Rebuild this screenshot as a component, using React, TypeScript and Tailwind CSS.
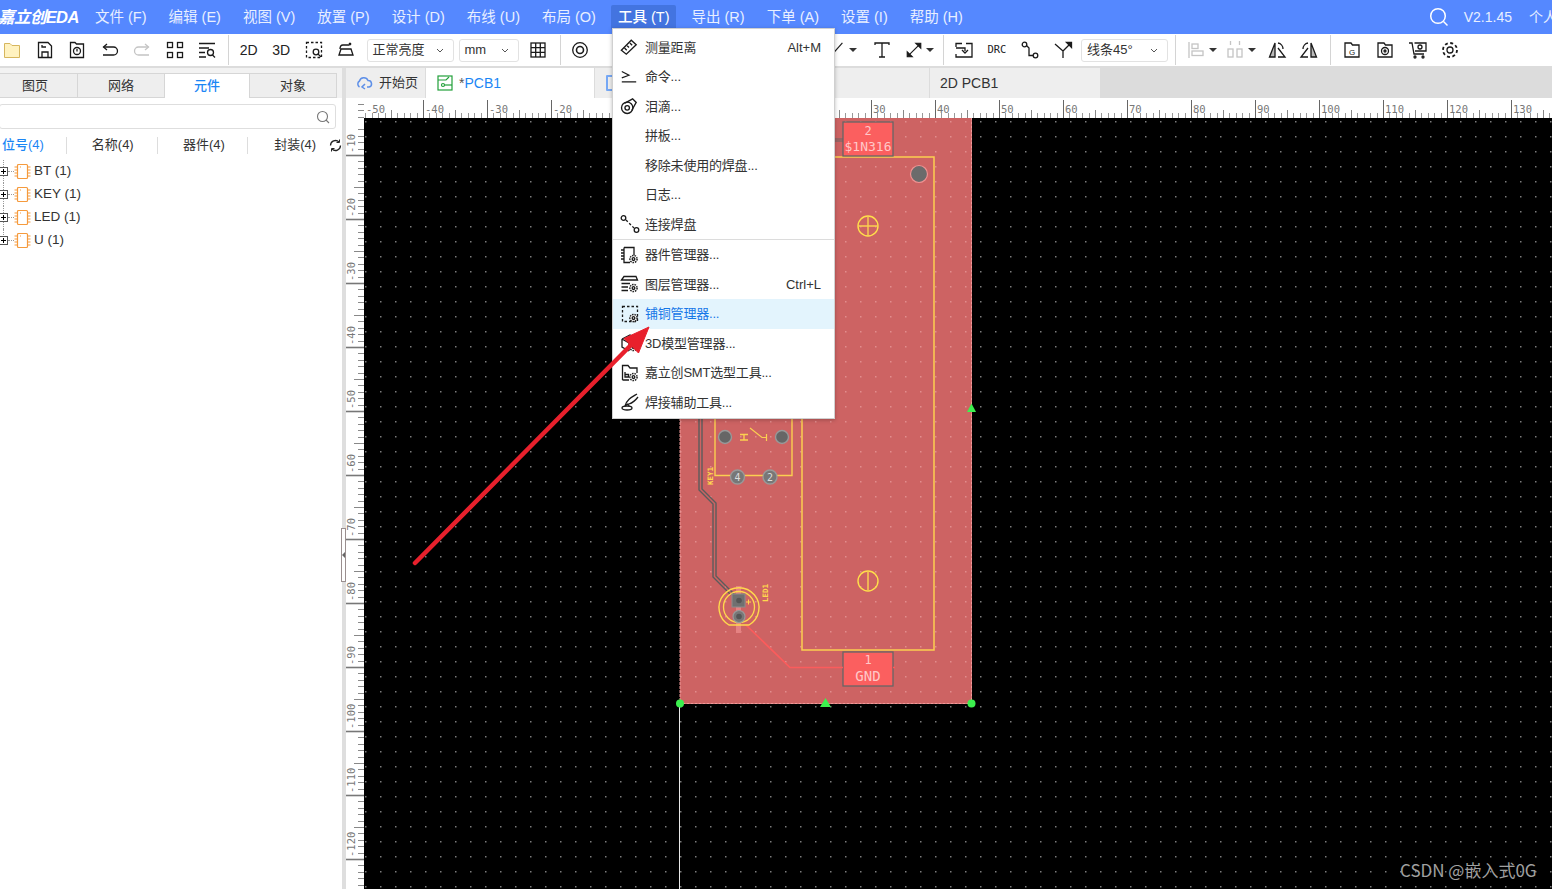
import type { ReactNode } from "react";

const menus = ["文件 (F)", "编辑 (E)", "视图 (V)", "放置 (P)", "设计 (D)", "布线 (U)", "布局 (O)"];
const menusAfter = ["导出 (R)", "下单 (A)", "设置 (I)", "帮助 (H)"];

function Ic({ children, size = 20, light = false }: { children: ReactNode; size?: number; light?: boolean }) {
  return (
    <svg width={size} height={size} viewBox="0 0 20 20" fill="none" stroke={light ? "#c4c4c4" : "#1a1a1a"} strokeWidth="1.3">
      {children}
    </svg>
  );
}

function Gear({ x, y }: { x: number; y: number }) {
  return (
    <g transform={`translate(${x} ${y})`}>
      <circle r="3.6" fill="#fff" stroke="#222" strokeWidth="1.5" strokeDasharray="1.6 0.9" />
      <circle r="1.3" />
    </g>
  );
}

function Tool({ children, w = "w-[32.5px]" }: { children: ReactNode; w?: string }) {
  return <div className={`${w} h-full flex items-center justify-center shrink-0`}>{children}</div>;
}

function Caret() {
  return <div className="ml-[3px] w-0 h-0 border-x-[4px] border-x-transparent border-t-[4px] border-t-[#333]" />;
}

function Sep({ className = "" }: { className?: string }) {
  return <div className={`w-px h-[30px] bg-[#d4d4d4] shrink-0 ${className}`} />;
}

function Select({ label, className }: { label: string; className: string }) {
  return (
    <div className={`h-[23px] border border-[#e2e2e2] rounded-[3px] flex items-center justify-between pl-[5px] pr-[9px] text-[13px] text-[#333] shrink-0 ${className}`}>
      <span>{label}</span>
      <svg width="8" height="5" viewBox="0 0 8 5" fill="none" stroke="#555" strokeWidth="1"><path d="M1 1l3 3 3-3" /></svg>
    </div>
  );
}

function MenuRow({ icon, label, keys, active = false }: { icon?: ReactNode; label: string; keys?: string; active?: boolean }) {
  return (
    <div className={`h-[29.5px] flex items-center pl-[7px] pr-[13px] text-[13px] ${active ? "bg-[#e3f4fd] text-[#1677e8]" : "text-[#333]"}`}>
      <div className="w-[25px] h-[20px] flex items-center shrink-0">{icon}</div>
      <span className="flex-1 whitespace-nowrap tracking-[-0.2px]">{label}</span>
      {keys && <span className="text-[#333]">{keys}</span>}
    </div>
  );
}

function Chip() {
  return (
    <svg width="17" height="17" viewBox="0 0 17 17" fill="none" stroke="#f59a3c" strokeWidth="1.2">
      <rect x="3.5" y="1.5" width="10" height="14" rx="1" />
      <path d="M0.500 4H3.500M0.500 7H3.500M0.500 10H3.500M0.500 13H3.500M13.500 4H16.500M13.500 7H16.500M13.500 10H16.500M13.500 13H16.500" />
      <path d="M6 4H7" />
    </svg>
  );
}

function TreeRow({ label, last = false }: { label: string; last?: boolean }) {
  return (
    <div className="h-[23px] flex items-center text-[13px] text-[#333] relative">
      <div className={`absolute left-[3px] top-0 ${last ? "h-[12px]" : "h-full"} border-l border-dotted border-[#999]`} />
      <div className="relative -ml-[1px] w-[9px] h-[9px] border border-[#555] bg-white flex items-center justify-center shrink-0">
        <div className="absolute w-[5px] h-px bg-black" />
        <div className="absolute h-[5px] w-px bg-black" />
      </div>
      <div className="w-[6px] border-t border-dotted border-[#999] shrink-0" />
      <Chip />
      <span className="ml-[3px] text-[13.500px]">{label}</span>
    </div>
  );
}

function Canvas() {
  const hMajor = Array.from({ length: 19 }, (_, i) => 359 + i * 64);
  const vMajor = Array.from({ length: 12 }, (_, i) => 155 + i * 64);
  const minor = [1, 2, 3, 4, 6, 7, 8, 9];
  return (
    <svg className="block w-full h-full" viewBox="346 98 1206 791" fontFamily="'DejaVu Sans Mono', monospace">
      <defs>
        <pattern id="dots" x="5" y="1" width="15" height="15" patternUnits="userSpaceOnUse">
          <rect x="0" y="0" width="1.500" height="1.500" fill="#7c7c7c" />
        </pattern>
        <pattern id="boardDots" x="5" y="1" width="15" height="15" patternUnits="userSpaceOnUse">
          <rect x="0" y="0" width="1.500" height="1.500" fill="#e28d8d" />
        </pattern>
      </defs>
      <rect x="346" y="98" width="1206" height="791" fill="#fff" />

      {/* top ruler */}
      {hMajor.map((x, i) => (
        <g key={x}>
          {x >= 364 && <path d={`M${x + 0.5} 100V118`} stroke="#666" />}
          <path d={`M${x + 32.5} 110V118`} stroke="#888" />
          {minor.map((t) =>
            x + t * 6.4 >= 364 ? <path key={t} d={`M${Math.round(x + t * 6.4) + 0.5} 113V118`} stroke="#999" /> : null
          )}
          <text x={i === 0 ? 366 : x + 2} y={113} fontSize="10.5" fill="#777">{(i - 5) * 10}</text>
        </g>
      ))}

      {/* left ruler */}
      {vMajor.map((y, i) => (
        <g key={y}>
          <path d={`M346 ${y + 0.5}H364`} stroke="#777" strokeWidth="1.6" />
          <path d={`M354 ${y + 32.5}H364`} stroke="#888" />
          {minor.map((t) => (
            <path key={t} d={`M358 ${Math.round(y + t * 6.4) + 0.5}H364`} stroke="#8a8a8a" />
          ))}
          {minor.map((t) => (
            <path key={-t} d={`M358 ${Math.round(y - t * 6.4) + 0.5}H364`} stroke="#8a8a8a" />
          ))}
          <text transform={`translate(355 ${y - 2}) rotate(-90)`} fontSize="10.5" fill="#777">{`-${(i + 1) * 10}`}</text>
        </g>
      ))}

      {/* black canvas */}
      <rect x="364" y="118" width="1188" height="771" fill="#000" />
      <rect x="364" y="118" width="1188" height="771" fill="url(#dots)" />

      {/* board */}
      <rect x="680" y="118" width="292" height="586" fill="#cd6363" />
      <rect x="680" y="118" width="292" height="586" fill="url(#boardDots)" />
      <path d="M680 118V703.500H971.500V118" stroke="#f09a9a" strokeDasharray="3 1" fill="none" />
      <path d="M679.500 704V889" stroke="#e8e8e8" />

      {/* big outline */}
      <rect x="802" y="157" width="132" height="493" fill="none" stroke="#fbcf50" strokeWidth="1.500" />
      <circle cx="919" cy="174" r="8.500" fill="#6b6b6b" stroke="#f09292" strokeWidth="1.200" />
      <circle cx="868" cy="226" r="10" fill="none" stroke="#ffdf4a" strokeWidth="1.400" />
      <path d="M858 226H878M868 216V236" stroke="#fbcf50" strokeWidth="1.400" />
      <circle cx="868" cy="581" r="10" fill="none" stroke="#ffdf4a" strokeWidth="1.400" />
      <path d="M868 572V590" stroke="#fbcf50" strokeWidth="1.500" />

      {/* pad 2 */}
      <path d="M835 139H843M835 141H843" stroke="#666" />
      <rect x="843" y="122" width="50" height="34" fill="#fb5f5f" stroke="#666" strokeWidth="1.300" />
      <text x="868" y="135" textAnchor="middle" fontSize="12" fill="#ffc8c8">2</text>
      <text x="868" y="151" textAnchor="middle" fontSize="13" fill="#ffc8c8">$1N316</text>

      {/* pad 1 */}
      <rect x="843" y="652" width="50" height="34" fill="#fb5f5f" stroke="#666" strokeWidth="1.300" />
      <text x="868" y="664" textAnchor="middle" fontSize="12" fill="#ffc8c8">1</text>
      <text x="868" y="681" textAnchor="middle" fontSize="14" fill="#ffc8c8">GND</text>

      {/* traces */}
      <path d="M699 418V490L713 504V577L731 595" fill="none" stroke="#5c5c5c" strokeWidth="1.400" />
      <path d="M702 418V489L716 503V576L734 594" fill="none" stroke="#5c5c5c" strokeWidth="1.400" />
      <path d="M746 625L790 667.500H843M893 667.500H895" fill="none" stroke="#fb5c5c" strokeWidth="1.700" />

      {/* key switch */}
      <path d="M715 418V475.500H792V418" fill="none" stroke="#fbcf50" strokeWidth="1.400" />
      <path d="M740 434.500H748M744 434.500V440M740 440H748" stroke="#fbcf50" strokeWidth="1.400" />
      <path d="M750 428L762 437.500H767M766.500 434V441" stroke="#fbcf50" strokeWidth="1.200" fill="none" />
      <circle cx="725" cy="437" r="6.500" fill="#666" stroke="#999" strokeWidth="1.400" />
      <circle cx="782" cy="437" r="6.500" fill="#666" stroke="#999" strokeWidth="1.400" />
      <circle cx="737.500" cy="477" r="7" fill="#777" stroke="#999" strokeWidth="1.400" />
      <circle cx="770" cy="477" r="7" fill="#777" stroke="#999" strokeWidth="1.400" />
      <text x="737.500" y="481" textAnchor="middle" fontSize="10" fill="#ddd">4</text>
      <text x="770" y="481" textAnchor="middle" fontSize="10" fill="#ddd">2</text>
      <text transform="translate(713 485) rotate(-90)" fontSize="7.500" fontWeight="700" fill="#ffd84d">KEY1</text>

      {/* LED */}
      <rect x="736" y="586" width="5" height="47" fill="#e58282" />
      <path d="M729 625A20 20 0 1 1 749 625Z" fill="none" stroke="#ffd84d" strokeWidth="1.400" />
      <circle cx="739" cy="607" r="15.500" fill="none" stroke="#ffd84d" strokeWidth="1.300" />
      <rect x="732" y="594" width="13" height="13" fill="#707070" stroke="#8c8c8c" />
      <circle cx="739" cy="600.500" r="2.800" fill="#555" />
      <circle cx="739" cy="616.500" r="6" fill="#777" stroke="#999" strokeWidth="1.200" />
      <circle cx="739" cy="616.500" r="2.800" fill="#555" />
      <path d="M746 602H751M748.500 599.500V604.500" stroke="#ffd84d" />
      <text transform="translate(768 602) rotate(-90)" fontSize="7.500" fontWeight="700" fill="#ffd84d">LED1</text>

      {/* handles */}
      <circle cx="680" cy="703.500" r="4" fill="#3cf04e" />
      <circle cx="971.500" cy="703.500" r="4" fill="#3cf04e" />
      <path d="M825.500 698L831 707H820Z" fill="#3cf04e" />
      <path d="M971.500 403.500L976 412H967Z" fill="#3cf04e" />
    </svg>
  );
}

export default function App() {
  return (
    <div className="relative w-[1552px] h-[889px] overflow-hidden bg-white flex flex-col font-['Liberation_Sans','Noto_Sans_CJK_SC',sans-serif]">
      {/* menu bar */}
      <div className="h-[34px] bg-[#5588ff] text-white text-[14.500px] flex items-center shrink-0 relative">
        <div className="-ml-[2px] pt-[1px] w-[90px] text-[16.500px] font-bold italic tracking-[-0.6px] whitespace-nowrap">嘉立创EDA</div>
        <div className="flex items-center gap-[8px] mt-[1px]">
          {menus.map((label) => (
            <div key={label} className="px-[7px] h-[25px] flex items-center whitespace-nowrap text-[#e8efff]">{label}</div>
          ))}
          <div className="px-[7px] h-[25px] flex items-center whitespace-nowrap bg-[#4374e0] rounded-[2px] font-medium">工具 (T)</div>
          {menusAfter.map((label) => (
            <div key={label} className="px-[7px] h-[25px] flex items-center whitespace-nowrap text-[#e8efff]">{label}</div>
          ))}
        </div>
        <div className="ml-auto flex items-center -mr-[10px] whitespace-nowrap text-[14px]">
          <svg width="20" height="20" viewBox="0 0 20 20" fill="none" stroke="#fff" strokeWidth="1.500"><circle cx="9" cy="9" r="7.300" /><path d="M14.500 14.500L18.500 18.500" /></svg>
          <span className="ml-[15px] text-[#e8efff]">V2.1.45</span>
          <span className="ml-[17px] w-[33px] overflow-hidden text-[#e8efff]">个人版</span>
        </div>
      </div>

      {/* toolbar */}
      <div className="h-[34px] flex items-center shrink-0 border-b-2 border-[#dcdcdc]">
        <div className="-ml-[4px]" />
        <Tool><svg width="20" height="18" viewBox="0 0 20 18" fill="#fff2c0" stroke="#d6b65e"><path d="M2.500 2.500H8L10 4.500H17.500V16.500H2.500Z" /></svg></Tool>
        <Tool><Ic><path d="M3.500 2.500H13L16.500 6V17.500H3.500Z" /><path d="M7 17.500V12H13V17.500" /><path d="M7 5V7H11" /></Ic></Tool>
        <Tool><Ic><path d="M3.500 2.500H8L9.500 4H16.500V17.500H3.500Z" /><circle cx="10" cy="11" r="3.500" /><path d="M10 9V11.500" /></Ic></Tool>
        <Tool><Ic><path d="M7 4L3.500 7L7 10" /><path d="M3.500 7H13.500A4 4 0 0 1 13.500 15H3" /></Ic></Tool>
        <Tool><Ic light><path d="M13 4L16.500 7L13 10" /><path d="M16.500 7H6.500A4 4 0 0 0 6.500 15H17" /></Ic></Tool>
        <Tool><Ic><rect x="2.500" y="2.500" width="5" height="5" /><rect x="12.500" y="2.500" width="5" height="5" /><rect x="2.500" y="12.500" width="5" height="5" /><rect x="12.500" y="12.500" width="5" height="5" /></Ic></Tool>
        <Tool><Ic><path d="M2 3.500H18M2 8H12M2 12.500H8M2 17H9" /><circle cx="13.500" cy="12.500" r="3" /><path d="M15.500 15L18 17.500" /></Ic></Tool>
        <Sep className="ml-[4px] mr-[4px]" />
        <Tool><span className="text-[14px] text-[#222]">2D</span></Tool>
        <Tool><span className="text-[14px] text-[#222]">3D</span></Tool>
        <Tool><Ic><rect x="2.500" y="2.500" width="15" height="15" strokeDasharray="2.500 2" /><circle cx="12" cy="12" r="2.800" fill="#fff" /><path d="M14 14L17 17" /></Ic></Tool>
        <Tool><Ic><path d="M4 9C4 6 5 5 7 5H13L15 3M13 3L15 5" /><path d="M3 15L5 9H15L17 15Z" /></Ic></Tool>
        <Select label="正常亮度" className="w-[87px] ml-[4px]" />
        <Select label="mm" className="w-[60px] ml-[5px]" />
        <Tool w="w-[32.500px] ml-[3.500px]"><Ic><rect x="3" y="3" width="14" height="14" /><path d="M3 7.700H17M3 12.300H17M7.700 3V17M12.300 3V17" /></Ic></Tool>
        <Sep className="ml-[5px]" />
        <Tool w="w-[32.500px] ml-[3px]"><Ic><circle cx="10" cy="10" r="7.300" /><circle cx="10" cy="10" r="3.500" strokeWidth="1.600" /></Ic></Tool>
        <div className="w-[230px] shrink-0" />
        <Tool w="w-[32px]"><Ic size={18}><path d="M2 18L16 2" /></Ic><Caret /></Tool>
        <Tool w="w-[32px] ml-[8px]"><Ic><path d="M3 5V3H17V5M10 3V17M7 17H13" /></Ic></Tool>
        <Tool w="w-[42px]"><Ic size={18}><path d="M4 16L16 4" /><path d="M12 2.500L17.500 2.500L17.500 8Z" fill="#1a1a1a" /><path d="M2.500 12L2.500 17.500L8 17.500Z" fill="#1a1a1a" /></Ic><Caret /></Tool>
        <Sep className="ml-[3px]" />
        <Tool w="w-[33px] ml-[3px]"><Ic><path d="M2 7V3.500H8M12 3.500H18V17H2V14" /><path d="M2 8H11V11M8 10L11 13L14 10" /></Ic></Tool>
        <Tool w="w-[33px]"><span className="text-[11px] font-['DejaVu_Sans_Mono',monospace] text-[#222] scale-x-95">DRC</span></Tool>
        <Tool w="w-[33px]"><Ic><circle cx="4.500" cy="4.500" r="2.300" /><circle cx="15.500" cy="15.500" r="2.300" /><path d="M6.500 5.500L9 8V15.500H13" /></Ic></Tool>
        <Tool w="w-[33px]"><Ic><path d="M2 4L10 11V18M10 11L18 3" /><path d="M13.500 2.500H18.500V7.500Z" fill="#1a1a1a" /></Ic></Tool>
        <Select label="线条45°" className="w-[87px] ml-[2px]" />
        <Sep className="ml-[7px]" />
        <Tool w="w-[37px] ml-[7px]"><Ic light><path d="M3 2V18" /><rect x="6" y="4" width="6" height="4.500" /><rect x="6" y="11" width="11" height="4.500" /></Ic><Caret /></Tool>
        <Tool w="w-[40px]"><Ic light><path d="M5.500 1V5M14.500 1V5" /><rect x="3" y="9" width="5" height="8" /><rect x="12" y="9" width="5" height="8" /></Ic><Caret /></Tool>
        <Tool w="w-[32px] ml-[1px]"><Ic><path d="M8 3L2.500 17H8Z" fill="#bbb" /><path d="M11 17H18L11 8" /><path d="M11 3A6 6 0 0 1 16 9" /></Ic></Tool>
        <Tool w="w-[32px]"><Ic><path d="M12 3L17.500 17H12Z" fill="#bbb" /><path d="M9 17H2L9 8" /><path d="M9 3A6 6 0 0 0 4 9" /></Ic></Tool>
        <Sep className="ml-[5px]" />
        <Tool w="w-[33px] ml-[4px]"><Ic><path d="M3 3H9L10.500 5H17V17H3Z" /><text x="10" y="14.500" textAnchor="middle" fontSize="8" fill="#222" stroke="none">G</text></Ic></Tool>
        <Tool w="w-[33px]"><Ic><path d="M3 3H9L10.500 5H17V17H3Z" /><circle cx="10" cy="11" r="3.500" /><circle cx="10" cy="11" r="1" /></Ic></Tool>
        <Tool w="w-[33px]"><Ic><path d="M1 3H4L6 14H16" /><path d="M6.500 3H18V11H7" /><circle cx="12" cy="7" r="2" /><circle cx="7" cy="17" r="1" /><circle cx="15" cy="17" r="1" /></Ic></Tool>
        <Tool w="w-[32px]"><Ic><circle cx="10" cy="10" r="3" /><circle cx="10" cy="10" r="7" strokeWidth="1.800" strokeDasharray="3 2.500" /></Ic></Tool>
      </div>

      {/* main */}
      <div className="flex-1 flex min-h-0">
        {/* left panel */}
        <div className="w-[342px] shrink-0 flex flex-col overflow-hidden text-[13px] text-[#333]">
          <div className="h-[30px] bg-[#f2f2f2] pt-[5px] flex items-end pr-[5px] shrink-0">
            <div className="w-[78px] h-[25px] flex items-center justify-center pr-[7px] bg-[#eeeeee] border-y border-r border-[#d6d6d6]">图页</div>
            <div className="w-[87px] h-[25px] flex items-center justify-center bg-[#eeeeee] border-y border-r border-[#d6d6d6]">网络</div>
            <div className="w-[85px] h-[25px] flex items-center justify-center bg-white border-t border-r border-[#d6d6d6] text-[#1b86f5] font-medium">元件</div>
            <div className="w-[87px] h-[25px] flex items-center justify-center bg-[#eeeeee] border-y border-r border-[#d6d6d6]">对象</div>
          </div>
          <div className="h-[25px] w-[337px] -ml-px mt-[6px] border border-[#dedede] rounded-[3px] flex items-center justify-end pr-[5px] shrink-0">
            <svg width="14" height="14" viewBox="0 0 14 14" fill="none" stroke="#777" strokeWidth="1.100"><circle cx="6.500" cy="6.500" r="5" /><path d="M10 10L13 13" /></svg>
          </div>
          <div className="h-[19px] mt-[6.500px] flex items-center shrink-0 whitespace-nowrap">
            <div className="w-[67px] pl-[2px] text-[#1b86f5] font-medium">位号(4)</div>
            <div className="w-px h-[17px] bg-[#ddd]" />
            <div className="w-[91px] text-center pl-[2px]">名称(4)</div>
            <div className="w-px h-[17px] bg-[#ddd]" />
            <div className="w-[91px] text-center pl-[3px]">器件(4)</div>
            <div className="w-px h-[17px] bg-[#ddd]" />
            <div className="ml-[26px]">封装(4)</div>
            <svg className="ml-[13px] shrink-0" width="13" height="13" viewBox="0 0 13 13" fill="none" stroke="#222" strokeWidth="1.300"><path d="M11.500 6.500A5 5 0 0 1 3 10M1.500 6.500A5 5 0 0 1 10 3" /><path d="M10.500 0.500V3.500H7.500M2.500 12.500V9.500H5.500" strokeWidth="1" /></svg>
          </div>
          <div className="mt-[5px]">
            <TreeRow label="BT (1)" />
            <TreeRow label="KEY (1)" />
            <TreeRow label="LED (1)" />
            <TreeRow label="U (1)" last />
          </div>
        </div>

        {/* splitter */}
        <div className="w-[4px] shrink-0 bg-[#dedede] relative">
          <div className="absolute -left-px top-[460px] w-[5px] h-[54px] bg-white border border-[#9a8f8f] flex items-center justify-center">
            <div className="w-0 h-0 border-y-[3px] border-y-transparent border-r-[3px] border-r-[#666]" />
          </div>
        </div>

        {/* work area */}
        <div className="flex-1 min-w-0 flex flex-col">
          <div className="h-[30px] bg-[#dcdcdc] flex shrink-0 text-[13px] text-[#333]">
            <div className="w-[80px] bg-[#eeeeee] border-r border-[#dcdcdc] flex items-center pl-[9px] gap-[6px]">
              <svg width="18" height="14" viewBox="0 0 18 14" fill="none" stroke="#5d8fe8" strokeWidth="1.500"><path d="M4.500 11A3.500 3.500 0 0 1 4.500 5 4.500 4.500 0 0 1 13 4.500 3.300 3.300 0 0 1 14 11H12" /><path d="M10 8L7 11L10 13" /></svg>
              <span>开始页</span>
            </div>
            <div className="w-[169px] bg-white border-r border-[#dcdcdc] flex items-center pl-[11px] gap-[6px] text-[14px] text-[#1b86f5]">
              <svg width="16" height="16" viewBox="0 0 16 16" fill="none" stroke="#22a03a" strokeWidth="1.200"><rect x="1" y="1" width="14" height="14" /><path d="M1 5H9L12 2" /><circle cx="6" cy="10" r="1.500" /><path d="M7.500 10H15" /></svg>
              <span><span className="text-[#555]">*</span>PCB1</span>
            </div>
            <div className="w-[335px] bg-[#eeeeee] border-r border-[#dcdcdc] flex items-center pl-[11px]">
              <div className="w-[11px] h-[16px] border-2 border-[#76a8f5] rounded-[1px]" />
            </div>
            <div className="w-[170px] bg-[#eeeeee] flex items-center pl-[10px] text-[14px]">2D PCB1</div>
          </div>
          <div className="flex-1 min-h-0">
            <Canvas />
          </div>
        </div>
      </div>

      {/* tools dropdown */}
      <div className="absolute left-[612px] top-[28px] w-[223px] h-[391px] bg-white border border-[#d0d0d0] shadow-[0_1px_4px_rgba(0,0,0,0.25)] pt-[3.500px]">
        <MenuRow label="测量距离" keys="Alt+M" icon={<Ic size={18}><path d="M1.500 13.500L12.500 2.500L18 7.500L7 18Z" strokeWidth="1.500" /><path d="M5 11L7.500 13.500M8 8.500L10 10.500M11 5.500L13.500 8" strokeWidth="1.500" /></Ic>} />
        <MenuRow label="命令..." icon={<Ic size={18}><path d="M2 4L10 8L2 11M2 15.500H18" /></Ic>} />
        <MenuRow label="泪滴..." icon={<Ic size={18}><circle cx="8" cy="12" r="6.300" strokeWidth="1.500" /><circle cx="8" cy="12" r="2.500" strokeWidth="1.500" /><path d="M5 7L14 2L18 6L13 15" strokeWidth="1.500" /></Ic>} />
        <MenuRow label="拼板..." />
        <MenuRow label="移除未使用的焊盘..." />
        <MenuRow label="日志..." />
        <MenuRow label="连接焊盘" icon={<Ic size={20}><circle cx="3.500" cy="4" r="2.300" /><circle cx="16.500" cy="16" r="2.300" /><path d="M6 6L14 14" strokeDasharray="2.500 2" /></Ic>} />
        <div className="h-px bg-[#dcdcdc]" />
        <MenuRow label="器件管理器..." icon={<Ic size={20}><path d="M4 2.500H14V10M10 17.500H4V2.500" /><path d="M1 5H4M1 8H4M1 11H4M1 14H4" /><Gear x={13.500} y={14} /></Ic>} />
        <MenuRow label="图层管理器..." keys="Ctrl+L" icon={<Ic size={20}><path d="M1.500 6L4 2.500H16L17.500 6ZM1.500 9.500H10M1.500 13H8M1.500 16.500H8" /><Gear x={13.500} y={14} /></Ic>} />
        <MenuRow label="铺铜管理器..." active icon={<Ic size={20}><rect x="2.500" y="2.500" width="15" height="15" strokeDasharray="2.500 2" /><Gear x={13.500} y={14} /></Ic>} />
        <MenuRow label="3D模型管理器..." icon={<Ic size={20}><path d="M2 6L10 2L17 6V11M2 6V14L9 18M2 6L9 10V18" /><Gear x={13.500} y={14} /></Ic>} />
        <MenuRow label="嘉立创SMT选型工具..." icon={<Ic size={20}><path d="M2.500 17V2.500H8L10 5H17V10M9 17H2.500" /><path d="M5 9V14H8.500V11.500H5.500" /><Gear x={13.500} y={14} /></Ic>} />
        <MenuRow label="焊接辅助工具..." icon={<Ic size={20}><path d="M5 14C7 7 12 5 17 2M9 12C12 11 15 9 18 5M5 14L8 12L9 14" /><ellipse cx="7" cy="16" rx="5" ry="2" /></Ic>} />
      </div>

      {/* annotation arrow */}
      <svg className="absolute left-0 top-0 pointer-events-none" width="1552" height="889" viewBox="0 0 1552 889" fill="none">
        <path d="M415 563L634 342" stroke="#e8202c" strokeWidth="4.500" strokeLinecap="round" />
        <path d="M649 327L638.500 353L624 338.500Z" fill="#e8202c" stroke="#e8202c" strokeLinejoin="round" />
      </svg>

      <div className="absolute left-[1400px] top-[860px] text-[17px] leading-[20px] text-[#a0a0a0] whitespace-nowrap font-['Noto_Sans_CJK_SC',sans-serif]">CSDN @嵌入式0G</div>
    </div>
  );
}
